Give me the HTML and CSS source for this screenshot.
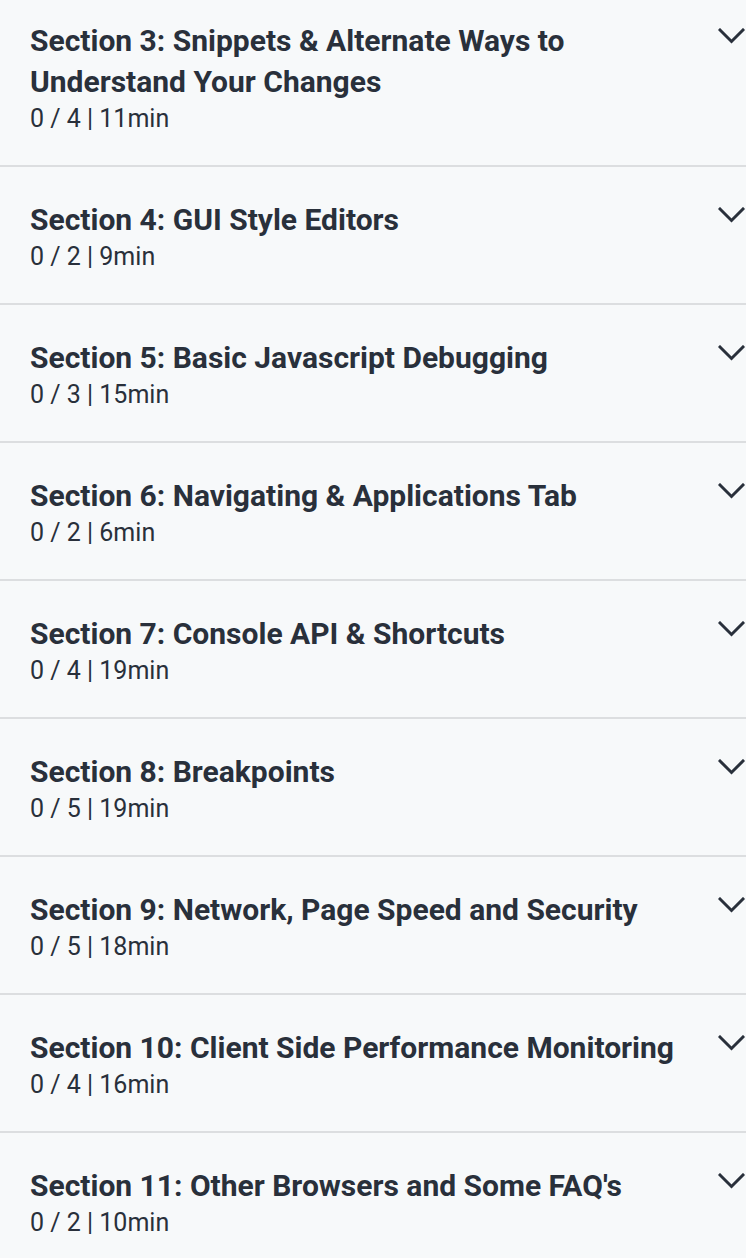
FILE: index.html
```html
<!DOCTYPE html>
<html>
<head>
<meta charset="utf-8">
<link rel="stylesheet" href="styles.css">
</head>
<body>
<div class="list">
  <div class="row first">
    <div class="info">
      <div class="title">Section 3: Snippets &amp; Alternate Ways to Understand Your Changes</div>
      <div class="meta">0 / 4 | 11min</div>
    </div>
    <svg class="chev" viewBox="0 0 27 16"><path d="M2 2 L13.5 13.5 L25 2"/></svg>
  </div>
  <div class="row">
    <div class="info">
      <div class="title">Section 4: GUI Style Editors</div>
      <div class="meta">0 / 2 | 9min</div>
    </div>
    <svg class="chev" viewBox="0 0 27 16"><path d="M2 2 L13.5 13.5 L25 2"/></svg>
  </div>
  <div class="row">
    <div class="info">
      <div class="title">Section 5: Basic Javascript Debugging</div>
      <div class="meta">0 / 3 | 15min</div>
    </div>
    <svg class="chev" viewBox="0 0 27 16"><path d="M2 2 L13.5 13.5 L25 2"/></svg>
  </div>
  <div class="row">
    <div class="info">
      <div class="title">Section 6: Navigating &amp; Applications Tab</div>
      <div class="meta">0 / 2 | 6min</div>
    </div>
    <svg class="chev" viewBox="0 0 27 16"><path d="M2 2 L13.5 13.5 L25 2"/></svg>
  </div>
  <div class="row">
    <div class="info">
      <div class="title">Section 7: Console API &amp; Shortcuts</div>
      <div class="meta">0 / 4 | 19min</div>
    </div>
    <svg class="chev" viewBox="0 0 27 16"><path d="M2 2 L13.5 13.5 L25 2"/></svg>
  </div>
  <div class="row">
    <div class="info">
      <div class="title">Section 8: Breakpoints</div>
      <div class="meta">0 / 5 | 19min</div>
    </div>
    <svg class="chev" viewBox="0 0 27 16"><path d="M2 2 L13.5 13.5 L25 2"/></svg>
  </div>
  <div class="row">
    <div class="info">
      <div class="title">Section 9: Network, Page Speed and Security</div>
      <div class="meta">0 / 5 | 18min</div>
    </div>
    <svg class="chev" viewBox="0 0 27 16"><path d="M2 2 L13.5 13.5 L25 2"/></svg>
  </div>
  <div class="row">
    <div class="info">
      <div class="title">Section 10: Client Side Performance Monitoring</div>
      <div class="meta">0 / 4 | 16min</div>
    </div>
    <svg class="chev" viewBox="0 0 27 16"><path d="M2 2 L13.5 13.5 L25 2"/></svg>
  </div>
  <div class="row">
    <div class="info">
      <div class="title">Section 11: Other Browsers and Some FAQ's</div>
      <div class="meta">0 / 2 | 10min</div>
    </div>
    <svg class="chev" viewBox="0 0 27 16"><path d="M2 2 L13.5 13.5 L25 2"/></svg>
  </div>
</div>
</body>
</html>
```
FILE: styles.css
```css
html, body {
  margin: 0;
  padding: 0;
  background: #f7f9fa;
}
body {
  font-family: Roboto, "Liberation Sans", sans-serif;
  color: #29303b;
  overflow: hidden;
}
.list {
  display: flex;
  flex-direction: column;
}
.row {
  display: flex;
  align-items: flex-start;
  justify-content: space-between;
  gap: 16px;
  padding: 32px 1px 30px 30px;
  border-bottom: 2px solid #dcdee0;
}
.row.first {
  padding-top: 20px;
}
.info {
  display: flex;
  flex-direction: column;
}
.title {
  font-size: 30px;
  font-weight: 700;
  line-height: 41px;
}
.meta {
  font-size: 25px;
  font-weight: 400;
  line-height: 33px;
}
.chev {
  flex: none;
  width: 27px;
  height: 16px;
  margin-top: 8px;
  fill: none;
  stroke: #29303b;
  stroke-width: 3;
  stroke-linecap: square;
}
```
